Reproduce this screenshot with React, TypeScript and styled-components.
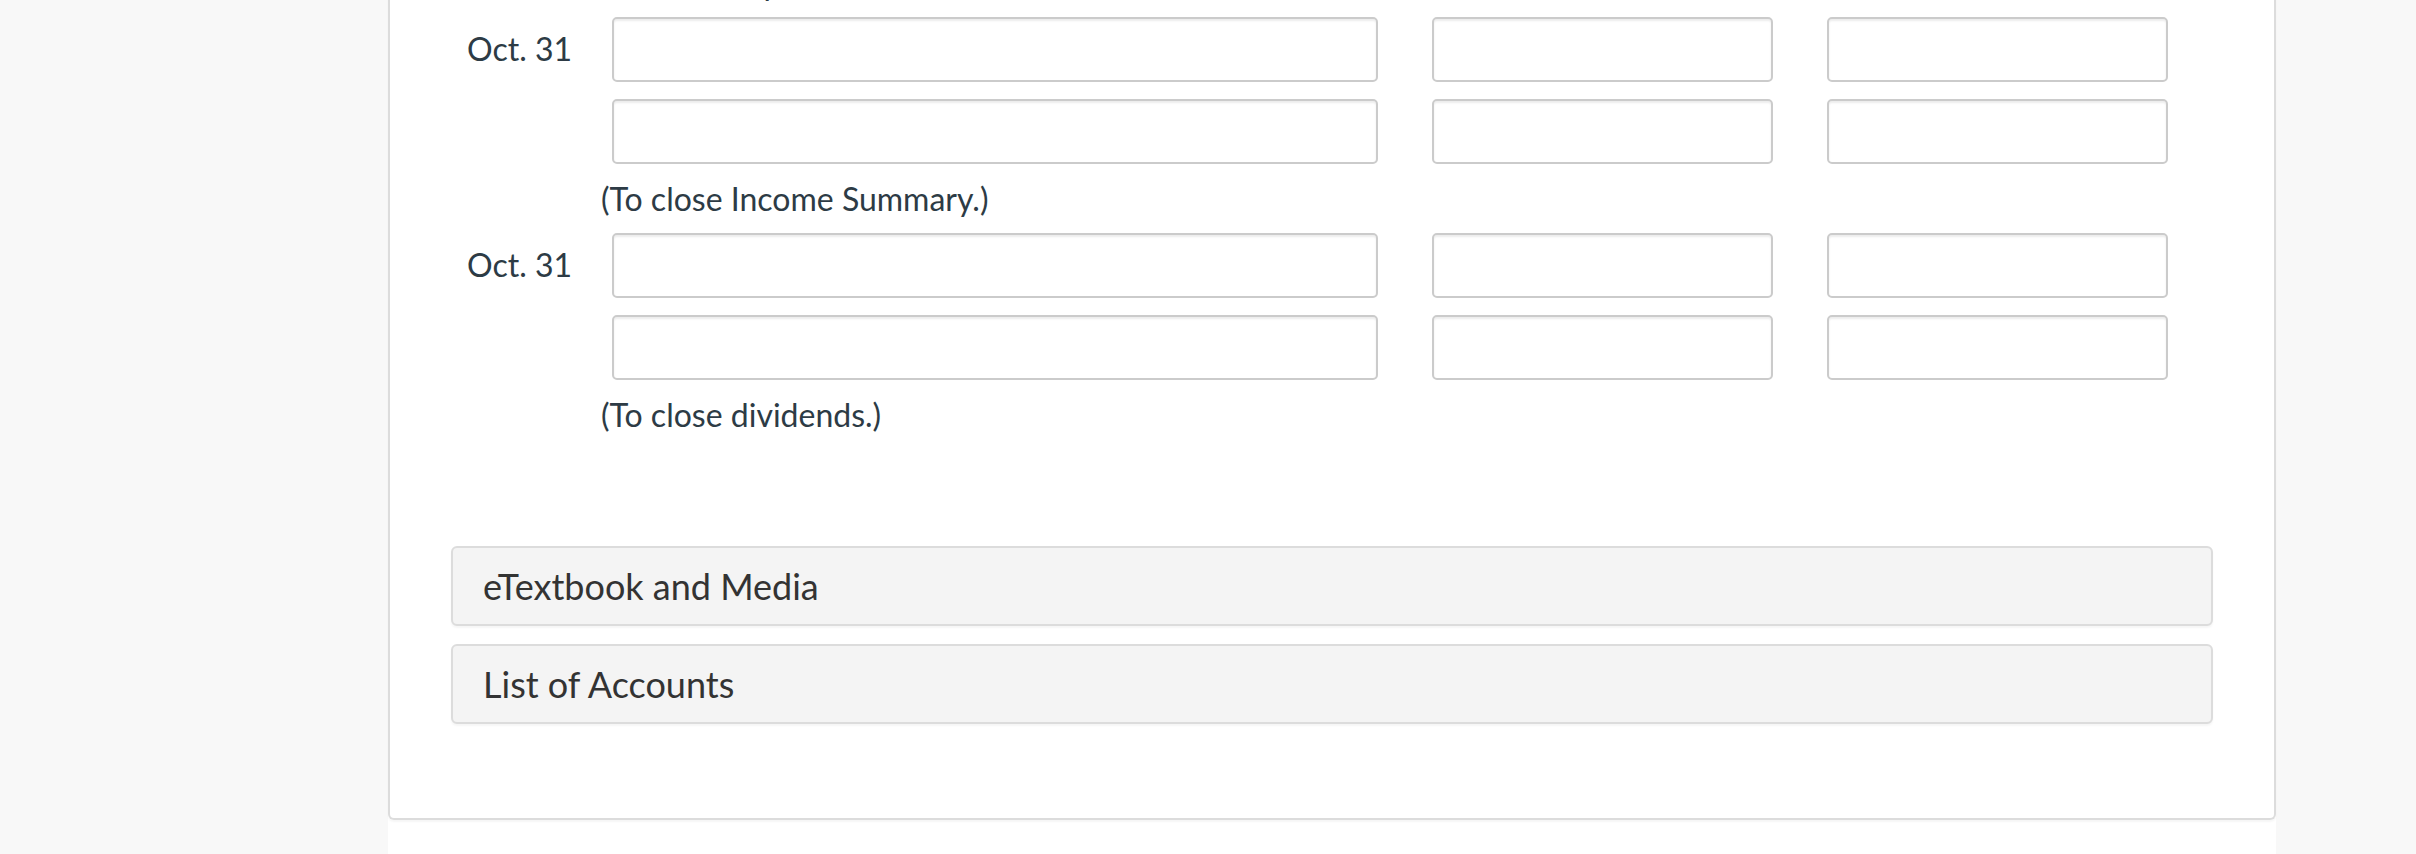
import React from "react";
import styled, { createGlobalStyle } from "styled-components";

const GlobalStyle = createGlobalStyle`
  html, body {
    margin: 0;
    padding: 0;
    background: #f8f8f8;
    overflow: hidden;
  }

  body {
    font-family: Lato, "Helvetica Neue", Arial, sans-serif;
  }
`;

const Page = styled.div`
  display: flex;
  height: 854px;
  padding-left: 388px;
  overflow: hidden;
`;

const Column = styled.main`
  width: 1888px;
  background: #fff;
  display: flex;
  flex-direction: column;
`;

// the page is scrolled: the top of the card sits above the viewport
const Card = styled.section`
  margin-top: -35px;
  padding: 0 61px 94px;
  border: 2px solid #dcdcdc;
  border-top: 0;
  border-radius: 0 0 6px 6px;
  box-shadow: 0 2px 2px rgba(0, 0, 0, 0.04);
`;

const Entries = styled.div`
  display: grid;
  grid-template-columns: 91px 766px 341px 341px;
  column-gap: 54px;
  row-gap: 17px;
  padding-left: 16px;
`;

const DateCell = styled.div`
  align-self: center;
  font-size: 32px;
  line-height: 1.2;
  color: #2d3b45;
  white-space: nowrap;
`;

const Field = styled.input`
  box-sizing: border-box;
  height: 65px;
  width: 100%;
  margin: 0;
  border: 2px solid #cbcbcb;
  border-radius: 5px;
  background: #fff;
  box-shadow: inset 0 2px 2px rgba(0, 0, 0, 0.075);
  font: inherit;
  font-size: 28px;
  padding: 0 16px;
  outline: none;
`;

const Note = styled.div`
  grid-column: 1 / -1;
  padding-left: 134px;
  font-size: 32px;
  line-height: 35px;
  color: #2d3b45;
`;

const Panels = styled.div`
  display: flex;
  flex-direction: column;
  gap: 18px;
  margin-top: 114px;
`;

const Panel = styled.div`
  box-sizing: border-box;
  height: 80px;
  display: flex;
  align-items: center;
  padding-left: 30px;
  background: #f4f4f4;
  border: 2px solid #dcdcdc;
  border-radius: 6px;
  box-shadow: 0 2px 2px rgba(0, 0, 0, 0.04);
  font-size: 36px;
  color: #333;
  cursor: pointer;
`;

type Entry = {
  date: string;
  note: string;
};

const ENTRIES: Entry[] = [
  { date: "Oct. 31", note: "(To close Income Summary.)" },
  { date: "Oct. 31", note: "(To close dividends.)" },
];

const EntryRow = ({ date }: { date?: string }) => (
  <>
    <DateCell>{date}</DateCell>
    <Field type="text" aria-label="Account" />
    <Field type="text" aria-label="Debit" />
    <Field type="text" aria-label="Credit" />
  </>
);

const App = () => (
  <>
    <GlobalStyle />
    <Page>
      <Column>
        <Card>
          <Entries>
            <Note>(To close expenses.)</Note>
            {ENTRIES.map((entry, i) => (
              <React.Fragment key={i}>
                <EntryRow date={entry.date} />
                <EntryRow />
                <Note>{entry.note}</Note>
              </React.Fragment>
            ))}
          </Entries>
          <Panels>
            <Panel>eTextbook and Media</Panel>
            <Panel>List of Accounts</Panel>
          </Panels>
        </Card>
      </Column>
    </Page>
  </>
);

export default App;
